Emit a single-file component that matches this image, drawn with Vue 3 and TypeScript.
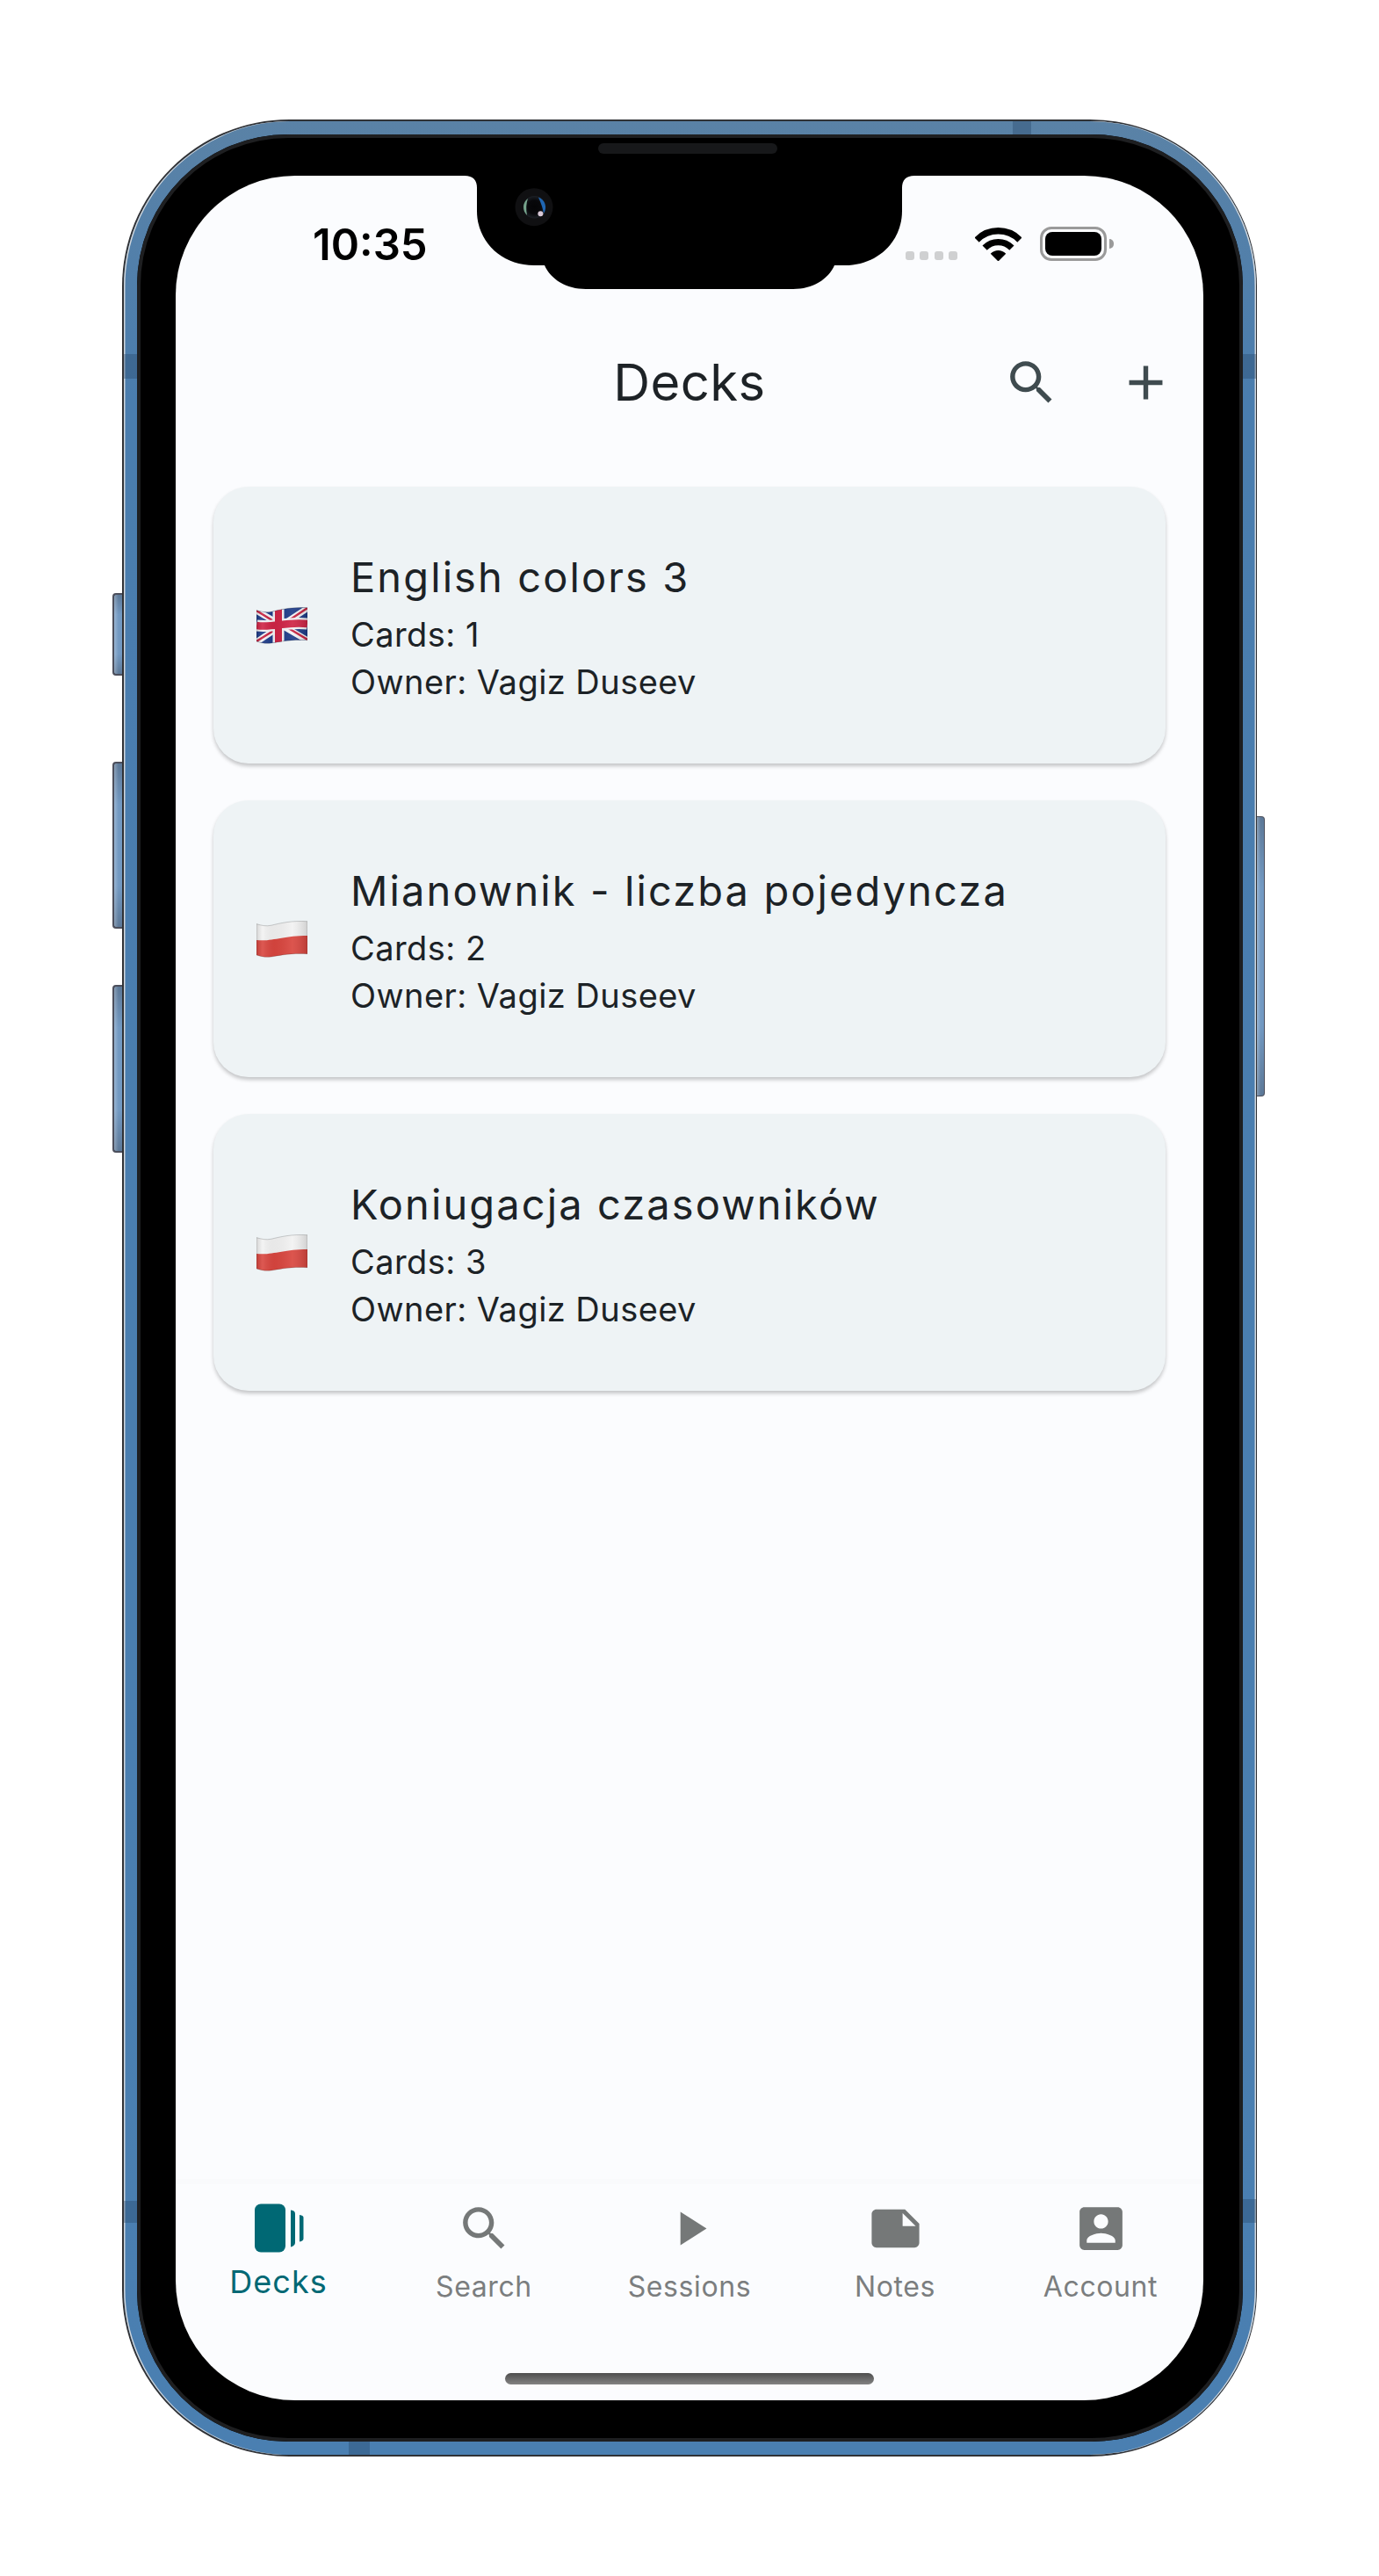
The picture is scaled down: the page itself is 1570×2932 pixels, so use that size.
<script setup lang="ts">
interface Deck { title: string; cards: number; flag: 'uk' | 'pl' }
interface Tab { label: string; icon: string; active?: boolean }

const decks: Deck[] = [
  { title: 'English colors 3', cards: 1, flag: 'uk' },
  { title: 'Mianownik - liczba pojedyncza', cards: 2, flag: 'pl' },
  { title: 'Koniugacja czasowników', cards: 3, flag: 'pl' },
]

const searchPath = 'M15.5 14h-.79l-.28-.27C15.41 12.59 16 11.11 16 9.5 16 5.91 13.09 3 9.5 3S3 5.91 3 9.5 5.91 16 9.5 16c1.61 0 3.09-.59 4.23-1.57l.27.28v.79l5 4.99L20.49 19l-4.99-5zm-6 0C7.01 14 5 11.99 5 9.5S7.01 5 9.5 5 14 7.01 14 9.5 11.99 14 9.5 14z'

const tabs: Tab[] = [
  { label: 'Decks', icon: 'decks', active: true },
  { label: 'Search', icon: searchPath },
  { label: 'Sessions', icon: 'M8 5v14l11-7z' },
  { label: 'Notes', icon: 'M22 10l-6-6H4c-1.1 0-2 .9-2 2v12.01c0 1.1.9 1.99 2 1.99l16-.01c1.1 0 2-.89 2-1.99v-8zm-7-4.5l5.5 5.5H15V5.5z' },
  { label: 'Account', icon: 'M3 5v14c0 1.1.89 2 2 2h14c1.1 0 2-.9 2-2V5c0-1.1-.9-2-2-2H5c-1.11 0-2 .9-2 2zm12 4c0 1.66-1.34 3-3 3s-3-1.34-3-3 1.34-3 3-3 3 1.34 3 3zm-9 8c0-2 4-3.1 6-3.1s6 1.1 6 3.1v1H6v-1z' },
]

const wavePath = 'M0 3.6C6 5.5 11 6.5 17 5.2 26 3 40-.5 58 .7V37.7C40 36.5 26 39.5 17 41 11 41.8 6 41 0 39Z'
</script>

<template>
  <div class="stage">
    <div class="phone">
      <i class="side-btn left b1"></i>
      <i class="side-btn left b2"></i>
      <i class="side-btn left b3"></i>
      <i class="side-btn right b4"></i>
      <div class="band">
        <i class="ant top-a"></i>
        <i class="ant bottom-a"></i>
        <i class="ant left-a"></i>
        <i class="ant left-b"></i>
        <i class="ant right-a"></i>
        <i class="ant right-b"></i>
        <div class="bezel">
          <i class="speaker"></i>
          <div class="screen">
            <svg class="notch" width="512" height="130" viewBox="-14 0 512 130">
              <defs>
                <radialGradient id="lens" cx="50%" cy="50%" r="50%">
                  <stop offset="0%" stop-color="#050507" />
                  <stop offset="60%" stop-color="#08080b" />
                  <stop offset="100%" stop-color="#1c2026" />
                </radialGradient>
              </defs>
              <path d="M-14 0Q0 0 0 14V40C0 75 28 102 65 102H77C84 118 102 129 124 129H360C382 129 400 118 407 102H419C456 102 484 75 484 40V14Q484 0 498 0Z" fill="#000" />
              <circle cx="65" cy="35.7" r="21.5" fill="#101012" />
              <circle cx="65.5" cy="35.7" r="12.8" fill="url(#lens)" />
              <path d="M70 24.5A12.4 12.4 0 0 1 76 43Q75 36 70 24.5Z" fill="#1f66b3" />
              <path d="M58 26A12.4 12.4 0 0 0 57 45Q55 34 58 26Z" fill="#77a58d" />
              <circle cx="72.4" cy="43.3" r="3" fill="#d9c9d8" />
            </svg>

            <div class="status">
              <span class="time">10:35</span>
              <div class="status-right">
                <div class="signal"><i></i><i></i><i></i><i></i></div>
                <svg class="wifi" width="53" height="38" viewBox="0 0 53 38">
                  <defs>
                    <clipPath id="wifi-wedge"><path d="M26.5 38.5L-12 0H65Z" /></clipPath>
                  </defs>
                  <g clip-path="url(#wifi-wedge)" fill="none" stroke="#000">
                    <circle cx="26.5" cy="38" r="34.2" stroke-width="7.4" />
                    <circle cx="26.5" cy="38" r="21.4" stroke-width="7.4" />
                    <circle cx="26.5" cy="38" r="6" stroke-width="12" />
                  </g>
                </svg>
                <div class="battery"><i class="fill"></i><i class="nub"></i></div>
              </div>
            </div>

            <header class="appbar">
              <h1 class="title">Decks</h1>
              <div class="actions">
                <svg class="icon" viewBox="0 0 24 24"><path :d="searchPath" /></svg>
                <svg class="icon" viewBox="0 0 24 24"><path d="M19 13h-6v6h-2v-6H5v-2h6V5h2v6h6v2z" /></svg>
              </div>
            </header>

            <main class="list">
              <article v-for="deck in decks" :key="deck.title" class="card">
                <svg class="flag" width="58" height="42" viewBox="0 0 58 42">
                  <defs>
                    <clipPath :id="`wave-${deck.cards}`"><path :d="wavePath" /></clipPath>
                    <linearGradient :id="`shade-${deck.cards}`" x1="0" y1="0" x2="1" y2="0">
                      <stop offset="0" stop-color="#000" stop-opacity=".12" />
                      <stop offset=".12" stop-color="#fff" stop-opacity=".1" />
                      <stop offset=".35" stop-color="#000" stop-opacity=".04" />
                      <stop offset=".7" stop-color="#fff" stop-opacity=".08" />
                      <stop offset="1" stop-color="#000" stop-opacity=".14" />
                    </linearGradient>
                  </defs>
                  <g :clip-path="`url(#wave-${deck.cards})`">
                    <template v-if="deck.flag === 'uk'">
                      <rect x="0" y="0" width="58" height="42" fill="#1d3b88" />
                      <g fill="none" stroke-linecap="butt">
                        <path d="M-2 3L60 39M60 0L-2 41" stroke="#f3f3f5" stroke-width="7" />
                        <path d="M0 4L26 20M33 22L58 37M58 1L34 17M24 24L0 39" stroke="#c6213f" stroke-width="2.4" />
                        <path d="M0 21C18 24 35 16 58 19" stroke="#f3f3f5" stroke-width="13" />
                        <path d="M25 0L25 42" stroke="#f3f3f5" stroke-width="13" />
                        <path d="M0 21C18 24 35 16 58 19" stroke="#cf2445" stroke-width="8.5" />
                        <path d="M25 0L25 42" stroke="#cf2445" stroke-width="8" />
                      </g>
                    </template>
                    <template v-else>
                      <rect x="0" y="0" width="58" height="42" fill="#f2f2f2" />
                      <path d="M0 22C18 24 30 17 58 17V42H0Z" fill="#d9463f" />
                    </template>
                    <rect x="0" y="0" width="58" height="42" :fill="`url(#shade-${deck.cards})`" />
                  </g>
                  <path :d="wavePath" fill="none" stroke="#000" stroke-opacity=".18" stroke-width="1" />
                </svg>
                <div class="card-text">
                  <h2 class="card-title">{{ deck.title }}</h2>
                  <p class="card-sub">Cards: {{ deck.cards }}</p>
                  <p class="card-sub">Owner: Vagiz Duseev</p>
                </div>
              </article>
            </main>

            <nav class="tabs">
              <div v-for="tab in tabs" :key="tab.label" class="tab" :class="{ active: tab.active }">
                <svg v-if="tab.icon === 'decks'" class="tab-icon" viewBox="0 0 65 65">
                  <rect x="5" y="4.5" width="35" height="55" rx="7" />
                  <path d="M46 11.5q5 .5 5 4v33q0 3.5-5 5z" />
                  <path d="M56 17q4.500 .5 4.500 3v24q0 2.500-4.500 3.500z" />
                </svg>
                <svg v-else class="tab-icon" viewBox="0 0 24 24"><path :d="tab.icon" /></svg>
                <span class="tab-label">{{ tab.label }}</span>
              </div>
            </nav>
            <i class="home"></i>
          </div>
        </div>
      </div>
    </div>
  </div>
</template>

<style>
html, body { margin: 0; background: #fff; }
</style>

<style scoped>
.stage {
  width: 1570px;
  height: 2932px;
  box-sizing: border-box;
  padding: 136px 0 0 139px;
  background: #fff;
  font-family: Inter, Roboto, "Liberation Sans", sans-serif;
}
.phone {
  position: relative;
  width: 1292px;
  height: 2660px;
  box-sizing: border-box;
  padding: 2px 1.5px;
  border-radius: 190px;
  background: #303236;
}
.band {
  position: relative;
  height: 100%;
  box-sizing: border-box;
  padding: 15px 15px;
  border-radius: 188px;
  background: linear-gradient(180deg, #5a82a6 0, #4a7dae 12%, #4a7fb1 100%);
  box-shadow: inset 1.5px 0 0 #cfd5db, inset -1.5px 0 0 #cfd5db;
  overflow: hidden;
}
.bezel {
  position: relative;
  height: 100%;
  box-sizing: border-box;
  padding: 47px 44.500px;
  border-radius: 172px;
  background: #000;
  box-shadow: inset 0 0 0 4px #1e1f21;
}
.screen {
  position: relative;
  display: flex;
  flex-direction: column;
  height: 100%;
  border-radius: 136px;
  background: #fbfcfe;
  overflow: hidden;
}
.speaker {
  position: absolute;
  left: 525.500px;
  top: 10px;
  width: 204px;
  height: 12px;
  border-radius: 6px;
  background: #17181a;
}
.side-btn {
  position: absolute;
  width: 11px;
  box-sizing: border-box;
  border: 2px solid #4c4f5c;
  background:
    linear-gradient(90deg, rgba(255, 255, 255, .28), rgba(255, 255, 255, 0) 55%),
    linear-gradient(180deg, #5c7897 0, #7299c2 25%, #7299c2 75%, #5c7897 100%);
}
.side-btn.left { left: -11px; border-right: 0; border-radius: 4px 0 0 4px; }
.side-btn.right { left: 1292px; width: 9px; border-width: 1.5px 1px 1.5px 0; border-radius: 0 4px 4px 0; }
.b1 { top: 539px; height: 94px; }
.b2 { top: 731px; height: 190px; }
.b3 { top: 985px; height: 191px; }
.b4 { top: 793px; height: 319px; }
.ant { position: absolute; background: rgba(40, 70, 105, .38); }
.top-a { left: 1012.500px; top: 0; width: 21px; height: 15px; }
.bottom-a { left: 256.500px; bottom: 0; width: 24px; height: 15px; }
.left-a { left: 0; top: 265px; width: 15px; height: 28px; }
.left-b { left: 0; top: 2367px; width: 15px; height: 25px; }
.right-a { right: 0; top: 265px; width: 15px; height: 28px; }
.right-b { right: 0; top: 2365px; width: 15px; height: 27px; }
.notch { position: absolute; left: 329px; top: 0; z-index: 2; }
.status {
  display: flex;
  flex: none;
  align-items: flex-start;
  height: 150px;
  box-sizing: border-box;
  padding: 0 110px 0 156px;
}
.time {
  margin-top: 50px;
  font-size: 49px;
  font-weight: 600;
  line-height: 58px;
  color: #000;
}
.status-right {
  display: flex;
  align-items: flex-end;
  margin-left: auto;
  margin-top: 58px;
}
.signal { display: flex; gap: 6.500px; margin-right: 20px; padding-bottom: 1px; }
.signal i { width: 10px; height: 10px; border-radius: 3px; background: #cfd0d1; }
.wifi { display: block; margin-right: 21px; }
.battery {
  position: relative;
  width: 76px;
  height: 39px;
  box-sizing: border-box;
  border: 3px solid #9a9a9a;
  border-radius: 13px;
  padding: 3px;
}
.battery .fill { display: block; height: 100%; border-radius: 8px; background: #000; }
.battery .nub {
  position: absolute;
  right: -11px;
  top: 11px;
  width: 5px;
  height: 11px;
  border-radius: 0 6px 6px 0;
  background: #9a9a9a;
}
.appbar {
  position: relative;
  display: flex;
  flex: none;
  align-items: center;
  justify-content: center;
  height: 170px;
}
.title {
  margin: 0;
  font-size: 58px;
  font-weight: 400;
  letter-spacing: .4px;
  color: #1d2226;
}
.actions {
  position: absolute;
  right: 33.500px;
  top: 53px;
  display: flex;
  gap: 65px;
}
.icon { display: block; width: 65px; height: 65px; fill: #3f4b4f; }
.list {
  display: flex;
  flex: 1;
  flex-direction: column;
  gap: 42px;
  padding: 34px 43px 0;
}
.card {
  display: flex;
  flex: none;
  align-items: center;
  height: 315px;
  padding-left: 49px;
  border-radius: 40px;
  background: #eef3f5;
  box-shadow: 0 3px 4px rgba(0, 0, 0, .22);
}
.flag { flex: none; display: block; margin-right: 49px; }
.card-text { display: flex; flex-direction: column; padding-top: 4px; color: #1c2226; }
.card-title {
  margin: 0 0 6px;
  font-size: 47px;
  font-weight: 400;
  line-height: 64px;
  letter-spacing: 2.100px;
}
.card-sub {
  margin: 0;
  font-size: 38px;
  font-weight: 400;
  line-height: 54px;
  letter-spacing: .45px;
}
.tabs {
  display: flex;
  flex: none;
  height: 252px;
  box-sizing: border-box;
  padding-top: 18px;
  border-top: 6px solid #f9fafc;
}
.tab {
  display: flex;
  flex: 1 1 0;
  flex-direction: column;
  align-items: center;
  color: #7b7e7f;
}
.tab-icon { display: block; width: 65px; height: 65px; fill: #757878; }
.tab-label {
  margin-top: 12px;
  font-size: 32px;
  font-weight: 400;
  line-height: 44px;
  letter-spacing: .6px;
}
.tab.active { color: #006874; }
.tab.active .tab-icon { fill: #006874; }
.tab.active .tab-label {
  margin-top: 6px;
  font-size: 36px;
  line-height: 44px;
  letter-spacing: 1px;
}
.home {
  position: absolute;
  left: 375px;
  bottom: 18px;
  width: 420px;
  height: 13px;
  border-radius: 7px;
  background: linear-gradient(180deg, #4e4e4e, #838383);
}
</style>
